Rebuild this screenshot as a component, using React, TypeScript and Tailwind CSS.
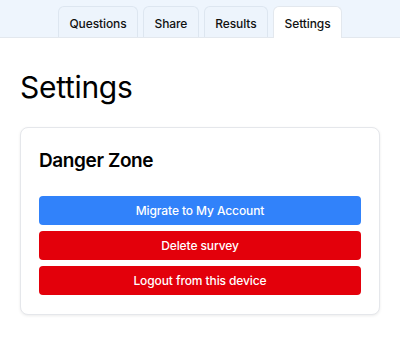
import { useState } from 'react';

const tabs = ['Questions', 'Share', 'Results', 'Settings'];

export default function App() {
  const [active, setActive] = useState('Settings');

  return (
    <div className="min-h-[338px] bg-white font-[Inter,sans-serif] text-black">
      <div className="flex h-[38px] justify-center gap-[5px] border-b border-[#e3e8ee] bg-[#eef5fd] pt-[6px]">
        {tabs.map((t) => (
          <button
            key={t}
            onClick={() => setActive(t)}
            className={
              t === active
                ? '-mb-px h-[32px] rounded-t-[6px] border border-b-0 border-[#e3e8ee] bg-white px-[10.5px] pt-[3px] text-[12px] font-medium tracking-[-0.1px] text-[#111]'
                : 'h-[31px] rounded-t-[6px] border border-b-0 border-[#dde6f0] bg-[#edf4fc] px-[10.5px] pt-[3px] text-[12px] font-medium tracking-[-0.1px] text-[#111]'
            }
          >
            {t}
          </button>
        ))}
      </div>

      <div className="px-5 pt-[30px]">
        <h1 className="text-[30px] font-normal leading-[38px] tracking-[-0.3px]">Settings</h1>

        <div className="mt-[21px] rounded-[8px] border border-[#e5e7eb] bg-white px-[18px] pb-[19px] pt-[20px] shadow-[0_1px_3px_rgba(0,0,0,0.08)]">
          <h2 className="text-[19px] font-semibold leading-[26px] tracking-[-0.4px]">Danger Zone</h2>
          <div className="mt-[22px] flex flex-col gap-[6px]">
            <button className="h-[29px] rounded-[4px] bg-[#3182fa] text-[12px] font-medium tracking-[-0.1px] text-white">
              Migrate to My Account
            </button>
            <button className="h-[29px] rounded-[4px] bg-[#e3000b] text-[12px] font-medium tracking-[-0.1px] text-white">
              Delete survey
            </button>
            <button className="h-[29px] rounded-[4px] bg-[#e3000b] text-[12px] font-medium tracking-[-0.1px] text-white">
              Logout from this device
            </button>
          </div>
        </div>
      </div>
    </div>
  );
}
